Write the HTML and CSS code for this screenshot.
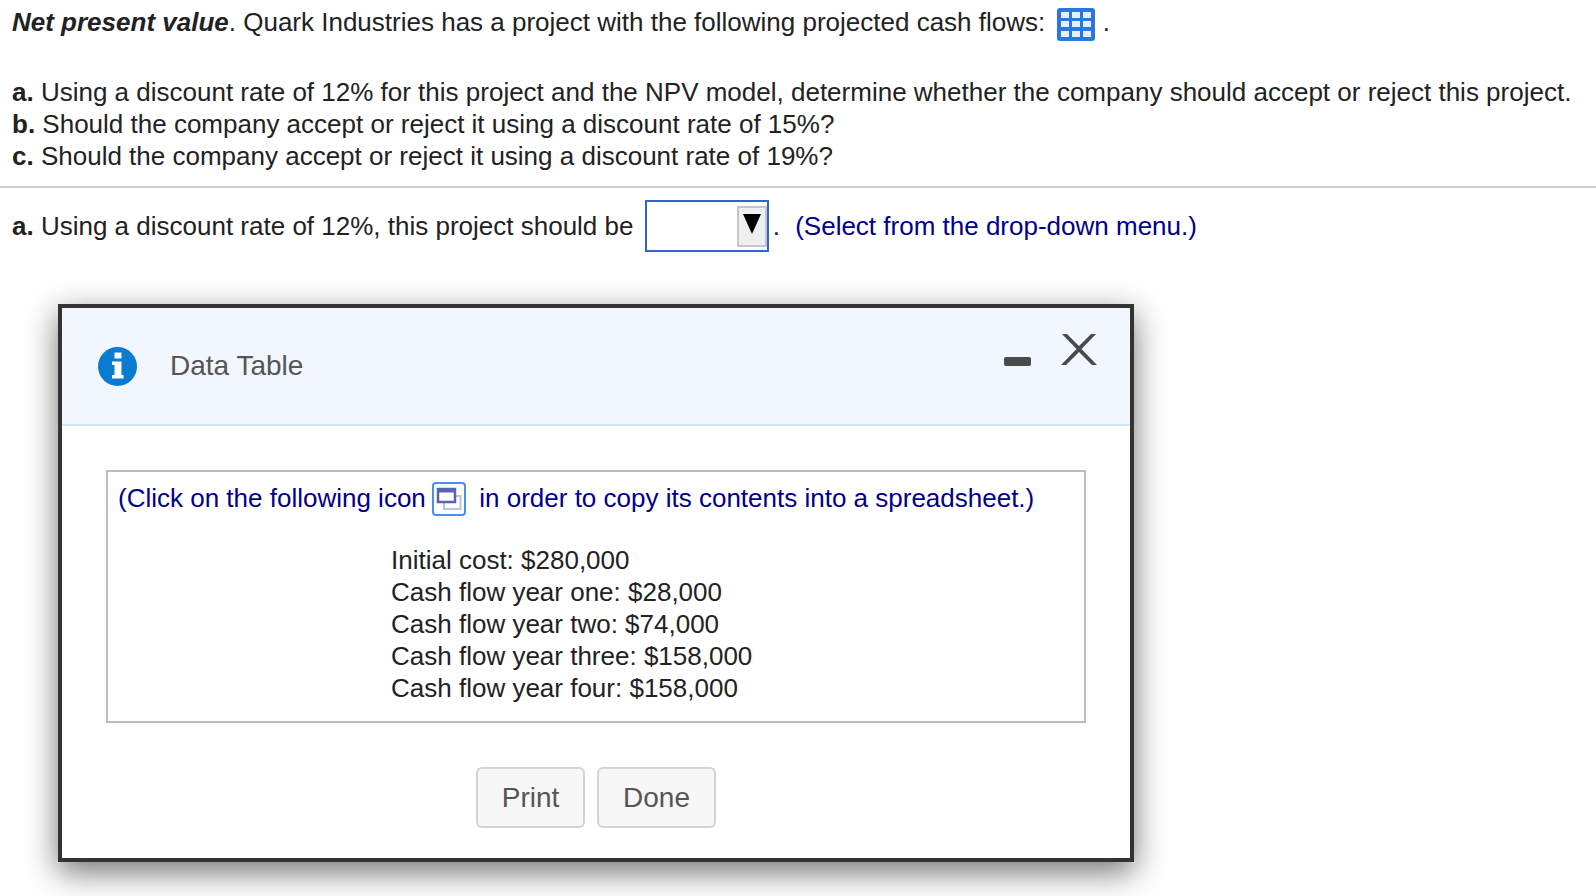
FILE: index.html
```html
<!DOCTYPE html>
<html lang="en">
<head>
<meta charset="utf-8">
<title>Net present value</title>
<link rel="stylesheet" href="styles.css">
</head>
<body>
<main class="question">
  <p class="intro"><b class="term">Net present value</b>. Quark Industries has a project with the following projected cash flows:
    <svg class="grid-icon" viewBox="0 0 38 33" width="38" height="33" aria-hidden="true">
      <rect width="38" height="33" rx="3" fill="#2b78dc"/>
      <g fill="#e6f0fc">
        <rect x="4" y="4" width="8" height="6"/><rect x="15" y="4" width="8" height="6"/><rect x="26" y="4" width="8" height="6"/>
        <rect x="4" y="13" width="8" height="6"/><rect x="15" y="13" width="8" height="6"/><rect x="26" y="13" width="8" height="6"/>
        <rect x="4" y="23" width="8" height="6"/><rect x="15" y="23" width="8" height="6"/><rect x="26" y="23" width="8" height="6"/>
      </g>
    </svg> .</p>
  <ol class="parts">
    <li><b>a.</b> Using a discount rate of 12% for this project and the NPV model, determine whether the company should accept or reject this project.</li>
    <li><b>b.</b> Should the company accept or reject it using a discount rate of 15%?</li>
    <li><b>c.</b> Should the company accept or reject it using a discount rate of 19%?</li>
  </ol>
  <hr class="rule">
  <p class="answer"><b>a.</b> Using a discount rate of 12%, this project should be
    <span class="select"><span class="select-btn"><svg viewBox="0 0 20 22" width="20" height="22" aria-hidden="true"><path d="M1 1H19L10 21Z" fill="#000"/></svg></span></span><span class="dot">.</span>
    <span class="hint">(Select from the drop-down menu.)</span></p>
</main>

<section class="dialog">
  <header class="dialog-head">
    <svg class="info" viewBox="0 0 39 39" width="39" height="39" aria-hidden="true">
      <circle cx="19.5" cy="19.5" r="19.5" fill="#0a7bd0"/>
      <path d="M16.500 5.500h7v6h-7zM14 14.500h9.500V28h2v3.500H14V28h2.500V18H14z" fill="#fff"/>
    </svg>
    <h2 class="title">Data Table</h2>
    <div class="controls">
      <span class="minimize"></span>
      <svg class="close" viewBox="0 0 36 31" width="36" height="31" aria-hidden="true"><path d="M1 0H6L18 12L30 0H35L20.500 15L36 31H31L18 18L5 31H0L15.500 15Z" fill="#4a4a4a"/></svg>
    </div>
  </header>
  <div class="dialog-body">
    <div class="data-box">
      <p class="copy-note">(Click on the following icon <span class="copy-btn"><svg viewBox="0 0 26 24" width="26" height="24" aria-hidden="true"><rect x="8" y="9" width="16.500" height="13" fill="none" stroke="#bcc3e2" stroke-width="2"/><rect x="2" y="2" width="17" height="13" fill="#fff" stroke="#5a64ac" stroke-width="2.500"/><rect x="2" y="2" width="17" height="3.500" fill="#5a64ac"/></svg></span> in order to copy its contents into a spreadsheet.)</p>
      <ul class="flows">
        <li>Initial cost: $280,000</li>
        <li>Cash flow year one: $28,000</li>
        <li>Cash flow year two: $74,000</li>
        <li>Cash flow year three: $158,000</li>
        <li>Cash flow year four: $158,000</li>
      </ul>
    </div>
    <div class="actions">
      <button class="btn print" type="button">Print</button>
      <button class="btn done" type="button">Done</button>
    </div>
  </div>
</section>
</body>
</html>
```
FILE: styles.css
```css
* { box-sizing: border-box; }
html, body { margin: 0; padding: 0; height: 100%; overflow: hidden; background: #fff; }
body { font-family: "Liberation Sans", Arial, sans-serif; font-size: 26px; line-height: 32px; color: #222; }
p, ol, ul, h2 { margin: 0; padding: 0; list-style: none; font-weight: normal; }
.intro { padding: 6px 12px 0; height: 71px; }
.term { font-style: italic; }
.grid-icon { vertical-align: -10px; margin-left: 4px; margin-right: 1px; }
.parts { padding: 5px 12px 0; height: 115px; }
.rule { margin: 0; border: 0; height: 2px; background: #c9cedd; }
.answer { padding: 12px 12px 0; white-space: nowrap; }
.select { display: inline-block; width: 124px; height: 52px; vertical-align: -17px; border: 2px solid #2f66c8; position: relative; margin-left: 4px; background: #fff; }
.select-btn { position: absolute; right: 0; top: 4px; width: 30px; height: 41px; background: #efefef; border: 2px solid #c6c6c6; display: flex; justify-content: center; align-items: flex-start; padding-top: 5px; }
.dot { margin-left: 4px; }
.hint { color: #00008b; margin-left: 8px; }

.dialog { position: absolute; left: 58px; top: 304px; width: 1076px; background: #fff; border: 4px solid #333; box-shadow: 0 10px 30px rgba(0,0,0,.55); }
.dialog-head { display: flex; align-items: center; height: 118px; padding: 0 33px 0 36px; background: #f2f7ff; border-bottom: 2px solid #cfe4f7; }
.title { margin-left: 33px; font-size: 28px; color: #555; }
.controls { margin-left: auto; display: flex; align-items: center; gap: 30px; }
.minimize { width: 27px; height: 9px; background: #4a4a4a; border-radius: 2px; margin-bottom: 10px; }
.close { margin-bottom: 34px; }
.dialog-body { padding: 44px 44px 30px; }
.data-box { height: 253px; border: 2px solid #bdbdbd; padding: 10px 10px 0; }
.copy-note { color: #00008b; white-space: nowrap; height: 32px; }
.copy-btn { display: inline-flex; align-items: center; justify-content: center; width: 34px; height: 34px; margin: -8px 6px -8px -1px; border: 2px solid #4a90e8; border-radius: 4px; vertical-align: -4px; background: #fff; }
.flows { margin: 30px 0 0 273px; }
.actions { display: flex; justify-content: center; gap: 12px; margin-top: 44px; }
.btn { height: 61px; padding: 0; font: 28px "Liberation Sans", Arial, sans-serif; color: #555; background: #f7f7f7; border: 2px solid #d3d3d3; border-radius: 6px; }
.print { width: 109px; }
.done { width: 119px; }
```
